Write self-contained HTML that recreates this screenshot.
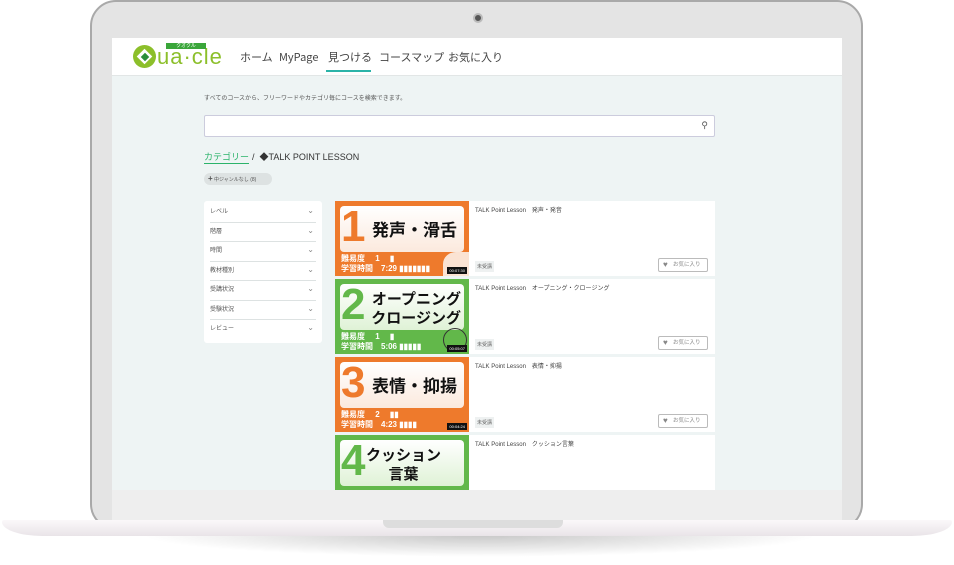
<!DOCTYPE html><html><head><meta charset="utf-8"><style>
*{margin:0;padding:0;box-sizing:border-box}
body{width:954px;height:565px;background:#fff;position:relative;overflow:hidden;font-family:"Liberation Sans","Noto Sans CJK JP",sans-serif}
.abs{position:absolute}
.lid{left:90px;top:0;width:773px;height:530px;border-radius:26px;background:#e4e4e4;border:2px solid #a9a9a9}
.chin{left:112px;top:490px;width:730px;height:30px;background:#eeeeee}
.screen{left:112px;top:38px;width:730px;height:452px;background:#eef4f4;overflow:hidden}
.hdr{left:0;top:0;width:730px;height:38px;background:#fff;border-bottom:1px solid #e2e6e6}
.nav{top:11px;font-size:11px;line-height:16px;height:16px;color:#444;white-space:nowrap;font-family:"Noto Sans CJK JP",sans-serif}
.base{left:2px;top:520px;width:950px;height:16px;background:linear-gradient(#fbf8fa,#e9e4e8);border-radius:2px 2px 40px 40px/2px 2px 14px 14px}
.shadow{left:140px;top:535px;width:680px;height:22px;background:radial-gradient(ellipse at 50% 0,rgba(0,0,0,.22),rgba(0,0,0,0) 70%)}
.notch{left:383px;top:520px;width:180px;height:8px;background:#ddd;border-radius:0 0 6px 6px}
.side{left:92px;top:163px;width:118px;height:142px;background:#fff;border-radius:3px}
.si{position:absolute;left:6px;width:106px;height:19.5px;border-bottom:1.5px solid #dde2e2;font-size:6px;color:#555;line-height:19px}
.si:after{content:"⌄";position:absolute;right:2px;top:-2px;font-size:8px;color:#888}
.card{left:223px;width:380px;height:75px;background:#fff}
.th{position:absolute;left:0;top:0;width:134px;height:75px}
.tb{position:absolute;left:5px;top:5px;width:124px;height:46px;border-radius:4px;background:linear-gradient(#fff,#fbe9dd)}
.num{position:absolute;left:6px;top:1px;font-size:44px;font-weight:bold;line-height:50px}
.tt{position:absolute;font-weight:bold;color:#111;font-size:17px;line-height:19px;text-align:right;white-space:nowrap}
.meta{position:absolute;left:6px;top:53px;font-size:8px;font-weight:bold;color:#fff;line-height:10px;white-space:nowrap}
.ct{position:absolute;left:140px;top:4px;font-size:6px;color:#444}
.tag{position:absolute;left:140px;top:60px;font-size:5px;color:#666;background:#eef1f1;padding:2px}
.fav{position:absolute;right:7px;top:57px;width:50px;height:14px;border:1px solid #bbb;border-radius:2px;font-size:5.5px;color:#888;line-height:12px;padding-left:14px}
.fav:before{content:"♥";position:absolute;left:4px;color:#888;font-size:8px}
.dur{position:absolute;right:2px;bottom:2px;background:#111;color:#fff;font-size:4px;padding:1px 2px}
</style></head><body>
<div class="abs lid"></div>
<div class="abs" style="left:473px;top:13px;width:10px;height:10px;border-radius:50%;background:#555;border:2px solid #bbb"></div>
<div class="abs chin"></div>
<div class="abs screen">
 <div class="abs hdr">
  <div class="abs" style="left:21px;top:7px;width:23px;height:23px;border-radius:50%;background:#8cbf2a"></div>
  <div class="abs" style="left:27px;top:13px;width:11px;height:11px;background:#fff;transform:rotate(45deg)"></div>
  <div class="abs" style="left:30px;top:16px;width:6px;height:6px;background:#2a8f3a;transform:rotate(45deg)"></div>
  <div class="abs" style="left:45px;top:6px;font-size:22px;color:#8cbf2a;line-height:26px;letter-spacing:1px">ua·cle</div>
  <div class="abs" style="left:54px;top:5px;width:40px;height:6px;background:#3aa63a;color:#fff;font-size:5px;line-height:6px;text-align:center">クオクル</div>
  <span class="abs nav" style="left:128px">ホーム</span>
  <span class="abs nav" style="left:167px">MyPage</span>
  <span class="abs nav" style="left:216px">見つける</span>
  <div class="abs" style="left:214px;top:32px;width:45px;height:2px;background:#2bb3a8"></div>
  <span class="abs nav" style="left:267px">コースマップ</span>
  <span class="abs nav" style="left:336px">お気に入り</span>
 </div>
 <div class="abs" style="left:92px;top:55px;font-size:6px;color:#555">すべてのコースから、フリーワードやカテゴリ毎にコースを検索できます。</div>
 <div class="abs" style="left:92px;top:77px;width:511px;height:22px;background:#fff;border:1px solid #ccd;border-radius:2px"><span style="position:absolute;right:6px;top:4px;font-size:9px;color:#555">⚲</span></div>
 <div class="abs" style="left:92px;top:112px;font-size:9px;color:#2bb36a;border-bottom:1px solid #2bb36a">カテゴリー</div>
 <div class="abs" style="left:140px;top:112px;font-size:9px;color:#333">/ &nbsp;◆TALK POINT LESSON</div>
 <div class="abs" style="left:92px;top:135px;width:68px;height:12px;background:#dde2e2;border-radius:6px;font-size:5px;color:#555;line-height:12px;padding-left:4px"><b style="font-size:8px">+</b> 中ジャンルなし (8)</div>
 <div class="abs side">
  <div class="si" style="top:2px">レベル</div><div class="si" style="top:21.5px">階層</div><div class="si" style="top:41px">時間</div><div class="si" style="top:60.5px">教材種別</div><div class="si" style="top:80px">受講状況</div><div class="si" style="top:99.5px">受験状況</div><div class="si" style="top:119px;border:0">レビュー</div>
 </div>
 <div class="abs card" style="top:163px"><div class="th" style="background:#ee7a2c"><div class="tb"></div><div class="num" style="color:#ee7a2c">1</div><div class="tt" style="right:12px;top:20px">発声・滑舌</div><div class="meta">難易度　 1　 ▮<br>学習時間　7:29 ▮▮▮▮▮▮▮</div><div class="abs" style="right:0;bottom:0;width:26px;height:24px;border-radius:50% 0 0 0;background:#fbe3d3"></div><div class="dur">00:07:30</div></div><div class="ct">TALK Point Lesson　発声・発音</div><div class="tag">未受講</div><div class="fav">お気に入り</div></div>
 <div class="abs card" style="top:241px"><div class="th" style="background:#62b84a"><div class="tb" style="background:linear-gradient(#fff,#dff2d6)"></div><div class="num" style="color:#62b84a">2</div><div class="tt" style="right:8px;top:11px;font-size:15px">オープニング<br>クロージング</div><div class="meta">難易度　 1　 ▮<br>学習時間　5:06 ▮▮▮▮▮</div><div class="abs" style="right:2px;bottom:2px;width:24px;height:24px;border-radius:50%;border:1.5px solid #333"></div><div class="dur">00:05:07</div></div><div class="ct">TALK Point Lesson　オープニング・クロージング</div><div class="tag">未受講</div><div class="fav">お気に入り</div></div>
 <div class="abs card" style="top:319px"><div class="th" style="background:#ee7a2c"><div class="tb"></div><div class="num" style="color:#ee7a2c">3</div><div class="tt" style="right:12px;top:20px">表情・抑揚</div><div class="meta">難易度　 2　 ▮▮<br>学習時間　4:23 ▮▮▮▮</div><div class="dur">00:04:24</div></div><div class="ct">TALK Point Lesson　表情・抑揚</div><div class="tag">未受講</div><div class="fav">お気に入り</div></div>
 <div class="abs card" style="top:397px"><div class="th" style="background:#62b84a"><div class="tb" style="background:linear-gradient(#fff,#dff2d6)"></div><div class="num" style="color:#62b84a">4</div><div class="tt" style="right:28px;top:11px;font-size:15px;text-align:center">クッション<br>言葉</div></div><div class="ct">TALK Point Lesson　クッション言葉</div></div>
</div>
<div class="abs shadow"></div>
<div class="abs base"></div>
<div class="abs notch"></div>
</body></html>
